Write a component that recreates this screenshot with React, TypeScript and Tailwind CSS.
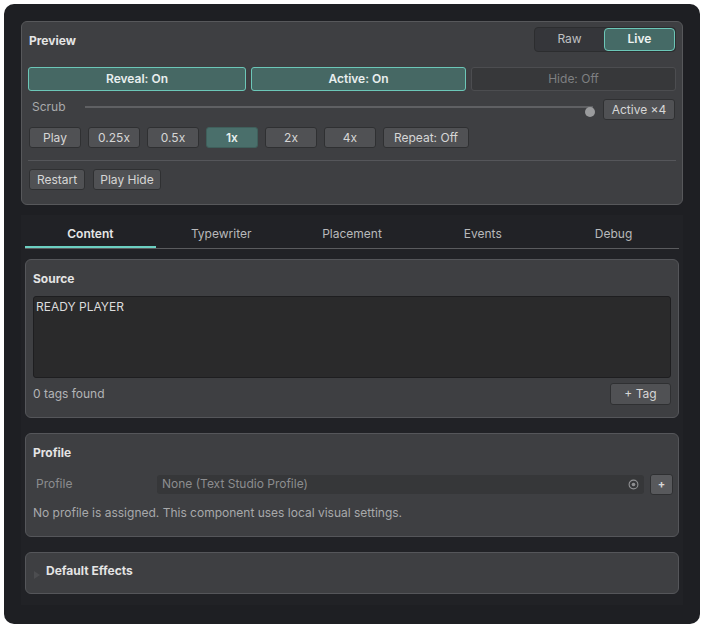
import React from 'react';

type BtnProps = {
    label: string;
    active?: boolean;
    className?: string;
};

const SmallButton: React.FC<BtnProps> = ({ label, active, className }) => (
    <button
        className={
            'flex h-[21px] items-center justify-center rounded-[3px] border text-[12px] ' +
            (active
                ? 'border-[#3f5f5b] bg-[#4a6f6b] font-semibold text-[#e6efee] '
                : 'border-[#2f3032] bg-[#505154] text-[#d6d6d6] ') +
            (className ?? '')
        }
    >
        {label}
    </button>
);

const Toggle: React.FC<{ label: string; on: boolean; className: string }> = ({ label, on, className }) => (
    <button
        className={
            'flex h-[24px] items-center justify-center rounded-[3px] border text-[12px] ' +
            (on
                ? 'border-[#6cc7b8] bg-[#466864] font-semibold text-[#e8eeee] '
                : 'border-[#4c4d50] bg-[#37383a] text-[#7f8082] ') +
            className
        }
    >
        {label}
    </button>
);

const TABS = ['Content', 'Typewriter', 'Placement', 'Events', 'Debug'];
const SPEEDS = ['0.25x', '0.5x', '1x', '2x', '4x'];

const PreviewCard: React.FC = () => (
    <div className="mx-[17px] flex h-[184px] flex-col rounded-[6px] border border-[#57585b] bg-[#3e3f42] px-[6px] pt-[5px]">
        <div className="flex h-[24px] items-center justify-between">
            <span className="pt-[3px] pl-[1px] text-[12px] font-bold text-[#e4e4e4]">Preview</span>
            <div className="flex h-[25px] w-[142px] overflow-hidden rounded-[4px] border border-[#2c2d2f] bg-[#35363a]">
                <div className="flex flex-1 items-center justify-center text-[12px] text-[#bfc0c2]">Raw</div>
                <div className="flex flex-1 items-center justify-center rounded-[4px] border border-[#6cc7b8] bg-[#456a66] text-[12px] font-semibold text-[#eef3f2]">
                    Live
                </div>
            </div>
        </div>

        <div className="mt-[16px] flex gap-[5px]">
            <Toggle label="Reveal: On" on className="w-[218px]" />
            <Toggle label="Active: On" on className="w-[215px]" />
            <Toggle label="Hide: Off" on={false} className="flex-1" />
        </div>

        <div className="mt-[8px] flex h-[21px] items-start">
            <span className="w-[57px] pl-[4px] text-[12px] leading-[16px] text-[#a9aaac]">Scrub</span>
            <div className="relative mt-[7px] h-[2px] w-[508px] bg-[#5f6063]">
                <div className="absolute top-[1px] right-[-2px] h-[10px] w-[10px] rounded-full bg-[#9a9b9d]" />
            </div>
            <div className="ml-auto mr-[1px]">
                <SmallButton label="Active ×4" className="w-[72px]" />
            </div>
        </div>

        <div className="mt-[7px] flex gap-[7px] pl-[1px]">
            <SmallButton label="Play" className="w-[52px]" />
            {SPEEDS.map((s) => (
                <SmallButton key={s} label={s} active={s === '1x'} className="w-[52px]" />
            ))}
            <SmallButton label="Repeat: Off" className="w-[86px]" />
        </div>

        <div className="mt-[12px] h-px bg-[#55565a]" />

        <div className="mt-[8px] flex gap-[8px] pl-[1px]">
            <SmallButton label="Restart" className="w-[56px]" />
            <SmallButton label="Play Hide" className="w-[68px]" />
        </div>
    </div>
);

const SourceCard: React.FC = () => (
    <div className="flex h-[159px] flex-col rounded-[6px] border border-[#55565a] bg-[#3e3f42] px-[7px] pt-[10px]">
        <span className="text-[12px] font-bold text-[#e4e4e4]">Source</span>
        <div className="mt-[8px] h-[82px] rounded-[3px] border border-[#1e1e20] bg-[#2a2a2b] px-[2px] pt-[1px] text-[12px] text-[#dcdcdc]">
            READY PLAYER
        </div>
        <div className="mt-[5px] flex items-center justify-between">
            <span className="text-[12px] text-[#b3b4b6]">0 tags found</span>
            <SmallButton label="+ Tag" className="h-[22px] w-[61px]" />
        </div>
    </div>
);

const ProfileCard: React.FC = () => (
    <div className="mt-[15px] flex h-[104px] flex-col rounded-[6px] border border-[#55565a] bg-[#3e3f42] px-[7px] pt-[10px]">
        <span className="text-[12px] font-bold text-[#e4e4e4]">Profile</span>
        <div className="mt-[12px] flex h-[20px] items-center">
            <span className="w-[124px] pl-[3px] text-[12px] text-[#8c8d8f]">Profile</span>
            <div className="flex h-[19px] flex-1 items-center justify-between rounded-[3px] bg-[#363739] pr-[5px] pl-[5px] text-[12px] text-[#8c8d8f]">
                <span>None (Text Studio Profile)</span>
                <svg width="11" height="11" viewBox="0 0 12 12">
                    <circle cx="6" cy="6" r="4.8" fill="none" stroke="#8f9092" strokeWidth="1.2" />
                    <circle cx="6" cy="6" r="2" fill="#8f9092" />
                </svg>
            </div>
            <button className="ml-[6px] mr-[-2px] flex h-[21px] w-[23px] items-center justify-center rounded-[3px] border border-[#2f3032] bg-[#58595c] text-[11px] font-bold leading-none text-[#d8d8d8]">
                +
            </button>
        </div>
        <span className="mt-[10px] text-[12px] text-[#a8a9ab]">
            No profile is assigned. This component uses local visual settings.
        </span>
    </div>
);

const EffectsCard: React.FC = () => (
    <div className="mt-[15px] flex h-[42px] items-center rounded-[6px] border border-[#55565a] bg-[#3e3f42] pl-[7px]">
        <svg width="8" height="8" viewBox="0 0 8 8" className="mt-[4px]">
            <path d="M1 0 L7 4 L1 8 Z" fill="#4c4d50" />
        </svg>
        <span className="mb-[4px] ml-[5px] text-[12px] font-bold text-[#e4e4e4]">Default Effects</span>
    </div>
);

const App: React.FC = () => (
    <div className="h-[629px] w-[704px] bg-white p-[4px] font-[family-name:Inter,sans-serif]">
        <div className="h-[620px] w-[696px] rounded-[10px] bg-[#1e1f23] pt-[17px]">
            <PreviewCard />
            <div className="mx-[17px] mt-[10px] h-[390px] bg-[#212226] px-[4px] pt-[3px]">
                <div className="flex h-[31px] border-b border-[#5a5b5e]">
                    {TABS.map((t, i) => (
                        <div
                            key={t}
                            className={
                                'flex flex-1 items-center justify-center border-b-2 pt-[4px] text-[12px] ' +
                                (i === 0
                                    ? 'border-[#6cd0c2] font-semibold text-[#e6e6e6]'
                                    : 'border-transparent text-[#b8b9bb]')
                            }
                        >
                            {t}
                        </div>
                    ))}
                </div>
                <div className="mt-[10px]">
                    <SourceCard />
                    <ProfileCard />
                    <EffectsCard />
                </div>
            </div>
        </div>
    </div>
);

export default App;
